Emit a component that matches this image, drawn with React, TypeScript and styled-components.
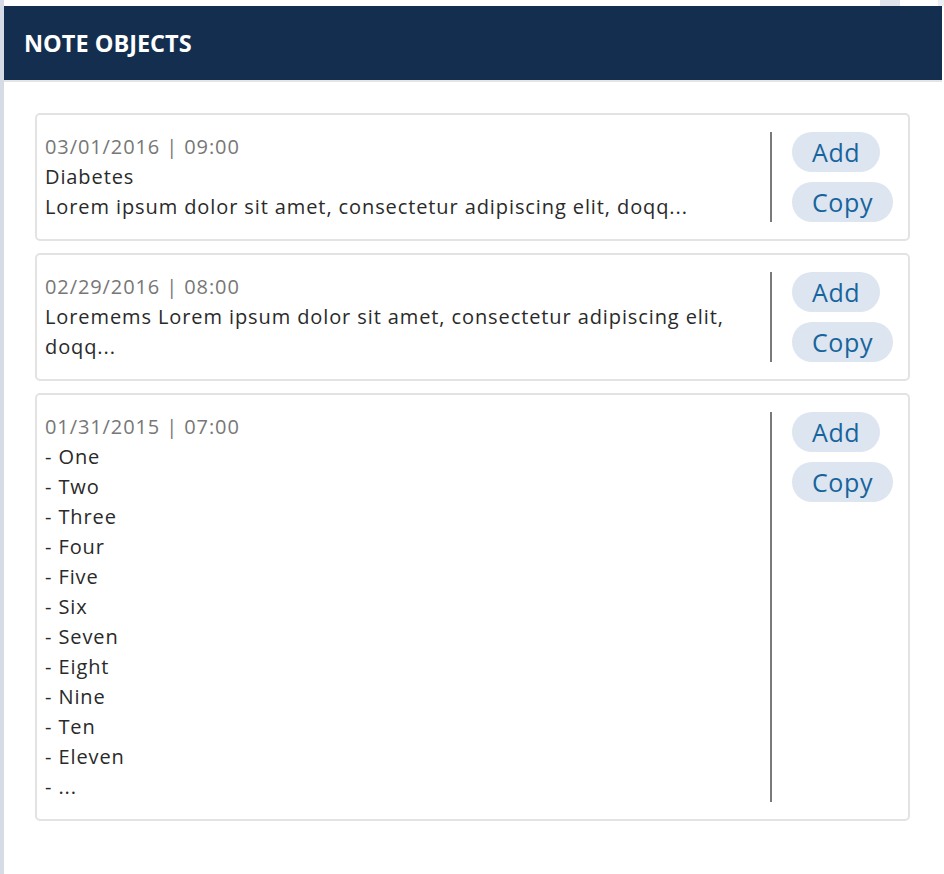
import React from "react";
import styled, { createGlobalStyle } from "styled-components";

const Global = createGlobalStyle`
  html, body { margin: 0; padding: 0; }
  body {
    font-family: "Open Sans", "Liberation Sans", sans-serif;
    background: #ffffff;
  }
`;

const Backdrop = styled.div`
  min-height: 874px;
  box-sizing: border-box;
  padding: 6px 2px 0 4px;
  background:
    linear-gradient(to right, #d5dce5 0 4px, transparent 4px),
    linear-gradient(to right, transparent 880px, #dfe4ec 880px 900px, transparent 900px) top / 100% 6px no-repeat,
    linear-gradient(to right, transparent 938px, #eceef1 938px) top / 100% 6px no-repeat,
    linear-gradient(to right, transparent 880px, #dfe4ec 880px 900px, transparent 900px) bottom / 100% 8px no-repeat,
    #ffffff;
`;

const Panel = styled.section`
  background: #ffffff;
  min-height: 868px;
  display: flex;
  flex-direction: column;
`;

const Header = styled.header`
  height: 74px;
  background: #132e4f;
  border-bottom: 2px solid #e4e5e7;
  display: flex;
  align-items: center;
  padding-left: 20px;
`;

const Title = styled.h1`
  margin: 0;
  color: #ffffff;
  font-size: 23.5px;
  font-weight: 700;
  letter-spacing: 0;
`;

const Body = styled.div`
  padding: 31px 32px 40px 31px;
  display: flex;
  flex-direction: column;
  gap: 12px;
`;

const Card = styled.article`
  border: 2px solid #e3e3e3;
  border-radius: 5px;
  padding: 17px 14px 17px 8px;
  display: flex;
`;

const Text = styled.div`
  flex: 1;
  padding-right: 30px;
  font-size: 20px;
  line-height: 30px;
  letter-spacing: 0.9px;
  color: #2a2a2a;
`;

const Stamp = styled.div`
  color: #777777;
`;

const Line = styled.div``;

const Actions = styled.div`
  border-left: 2px solid #7a7a7a;
  padding-left: 20px;
  display: flex;
  flex-direction: column;
  align-items: flex-start;
  gap: 10px;
  width: 102px;
`;

const Pill = styled.button`
  height: 40px;
  padding: 0 20px;
  border: none;
  border-radius: 20px;
  background: #dde5f0;
  color: #17649d;
  font-family: "Open Sans", "Liberation Sans", sans-serif;
  font-size: 25px;
  letter-spacing: 0.6px;
  line-height: 40px;
  cursor: pointer;
`;

type Note = { stamp: string; lines: string[] };

const notes: Note[] = [
  {
    stamp: "03/01/2016 | 09:00",
    lines: ["Diabetes", "Lorem ipsum dolor sit amet, consectetur adipiscing elit, doqq..."],
  },
  {
    stamp: "02/29/2016 | 08:00",
    lines: ["Loremems Lorem ipsum dolor sit amet, consectetur adipiscing elit, doqq..."],
  },
  {
    stamp: "01/31/2015 | 07:00",
    lines: [
      "- One",
      "- Two",
      "- Three",
      "- Four",
      "- Five",
      "- Six",
      "- Seven",
      "- Eight",
      "- Nine",
      "- Ten",
      "- Eleven",
      "- ...",
    ],
  },
];

export default function App() {
  return (
    <>
      <Global />
      <Backdrop>
        <Panel>
          <Header>
            <Title>NOTE OBJECTS</Title>
          </Header>
          <Body>
            {notes.map((n) => (
              <Card key={n.stamp}>
                <Text>
                  <Stamp>{n.stamp}</Stamp>
                  {n.lines.map((l, i) => (
                    <Line key={i}>{l}</Line>
                  ))}
                </Text>
                <Actions>
                  <Pill>Add</Pill>
                  <Pill>Copy</Pill>
                </Actions>
              </Card>
            ))}
          </Body>
        </Panel>
      </Backdrop>
    </>
  );
}
